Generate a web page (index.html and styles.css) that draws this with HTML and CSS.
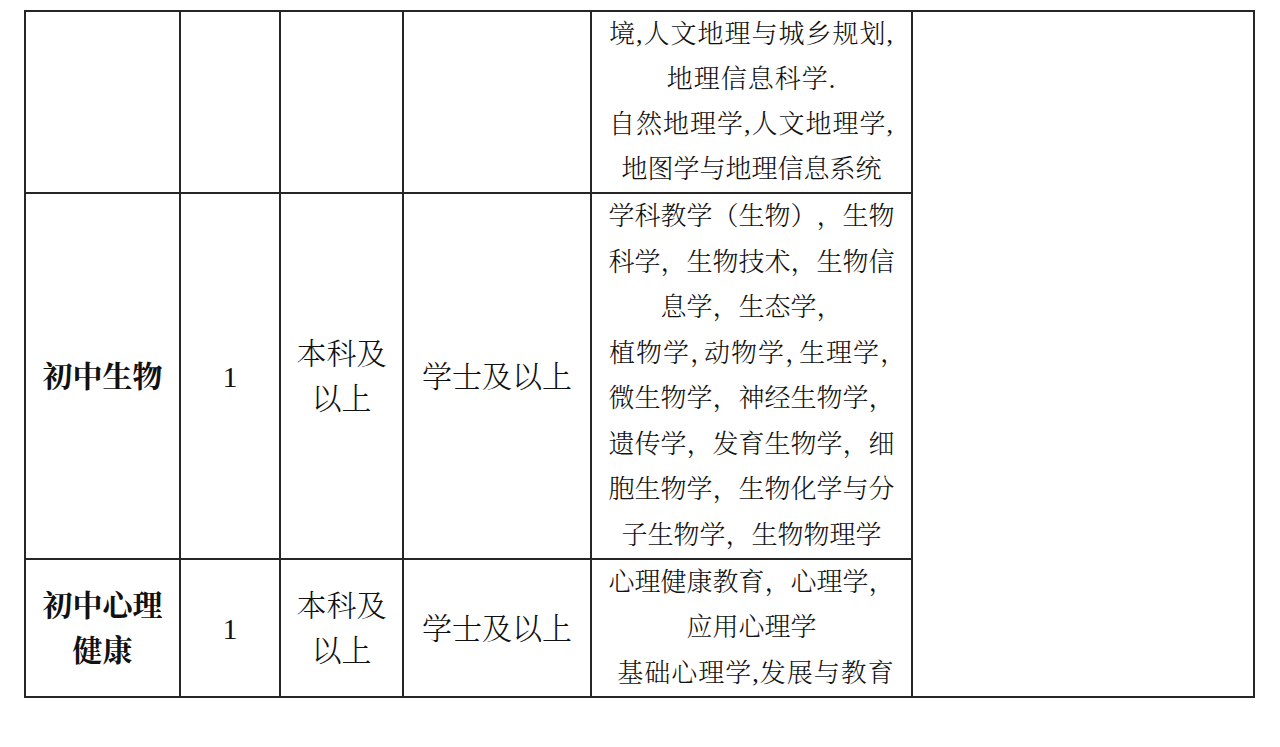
FILE: index.html
```html
<!DOCTYPE html>
<html lang="zh-CN">
<head>
<meta charset="utf-8">
<title>岗位表</title>
<link rel="stylesheet" href="styles.css">
</head>
<body>
<div class="sheet">
  <div class="cell note"></div>

  <div class="cell name"></div>
  <div class="cell num"></div>
  <div class="cell edu"></div>
  <div class="cell deg"></div>
  <div class="cell major r1">
    <div class="ln spaced">境,人文地理与城乡规划,</div>
    <div class="ln spaced">地理信息科学.</div>
    <div class="ln spaced">自然地理学,人文地理学,</div>
    <div class="ln">地图学与地理信息系统</div>
  </div>

  <div class="cell name">初中生物</div>
  <div class="cell num">1</div>
  <div class="cell edu">本科及<br>以上</div>
  <div class="cell deg">学士及以上</div>
  <div class="cell major">
    <div class="ln">学科教学（生物），生物</div>
    <div class="ln">科学，生物技术，生物信</div>
    <div class="ln">息学，生态学，</div>
    <div class="ln tight">植物学，动物学，生理学，</div>
    <div class="ln">微生物学，神经生物学，</div>
    <div class="ln">遗传学，发育生物学，细</div>
    <div class="ln">胞生物学，生物化学与分</div>
    <div class="ln">子生物学，生物物理学</div>
  </div>

  <div class="cell name">初中心理<br>健康</div>
  <div class="cell num">1</div>
  <div class="cell edu">本科及<br>以上</div>
  <div class="cell deg">学士及以上</div>
  <div class="cell major">
    <div class="ln">心理健康教育，心理学，</div>
    <div class="ln">应用心理学</div>
    <div class="ln spaced indent">基础心理学,发展与教育</div>
  </div>
</div>
</body>
</html>
```

FILE: styles.css
```css
html, body {
  margin: 0;
  padding: 0;
  background: #ffffff;
}

body {
  font-family: "Liberation Serif", "Noto Serif CJK SC", "Noto Sans CJK SC", serif;
  color: #111111;
}

.sheet {
  display: grid;
  grid-template-columns: 155px 100px 123px 188px 321px 342px;
  grid-template-rows: 182px 366px 138px;
  width: max-content;
  margin: 10px 0 0 24px;
  border-left: 2px solid #262626;
  border-top: 2px solid #262626;
}

.cell {
  box-sizing: border-box;
  border-right: 2px solid #262626;
  border-bottom: 2px solid #262626;
  display: flex;
  flex-direction: column;
  align-items: center;
  justify-content: center;
  text-align: center;
  font-size: 30px;
  line-height: 45px;
  font-weight: 300;
  white-space: nowrap;
}

.note {
  grid-column: 6;
  grid-row: 1 / 4;
}

.name {
  font-weight: 700;
}

.num {
  font-size: 30px;
}

.major {
  font-size: 26px;
  line-height: 45.5px;
  text-spacing-trim: space-all;
}

.major.r1 {
  line-height: 45px;
}

.spaced {
  letter-spacing: 1px;
}

.tight {
  font-feature-settings: "halt";
  letter-spacing: 1px;
}

.indent {
  padding-left: 9px;
}
```
